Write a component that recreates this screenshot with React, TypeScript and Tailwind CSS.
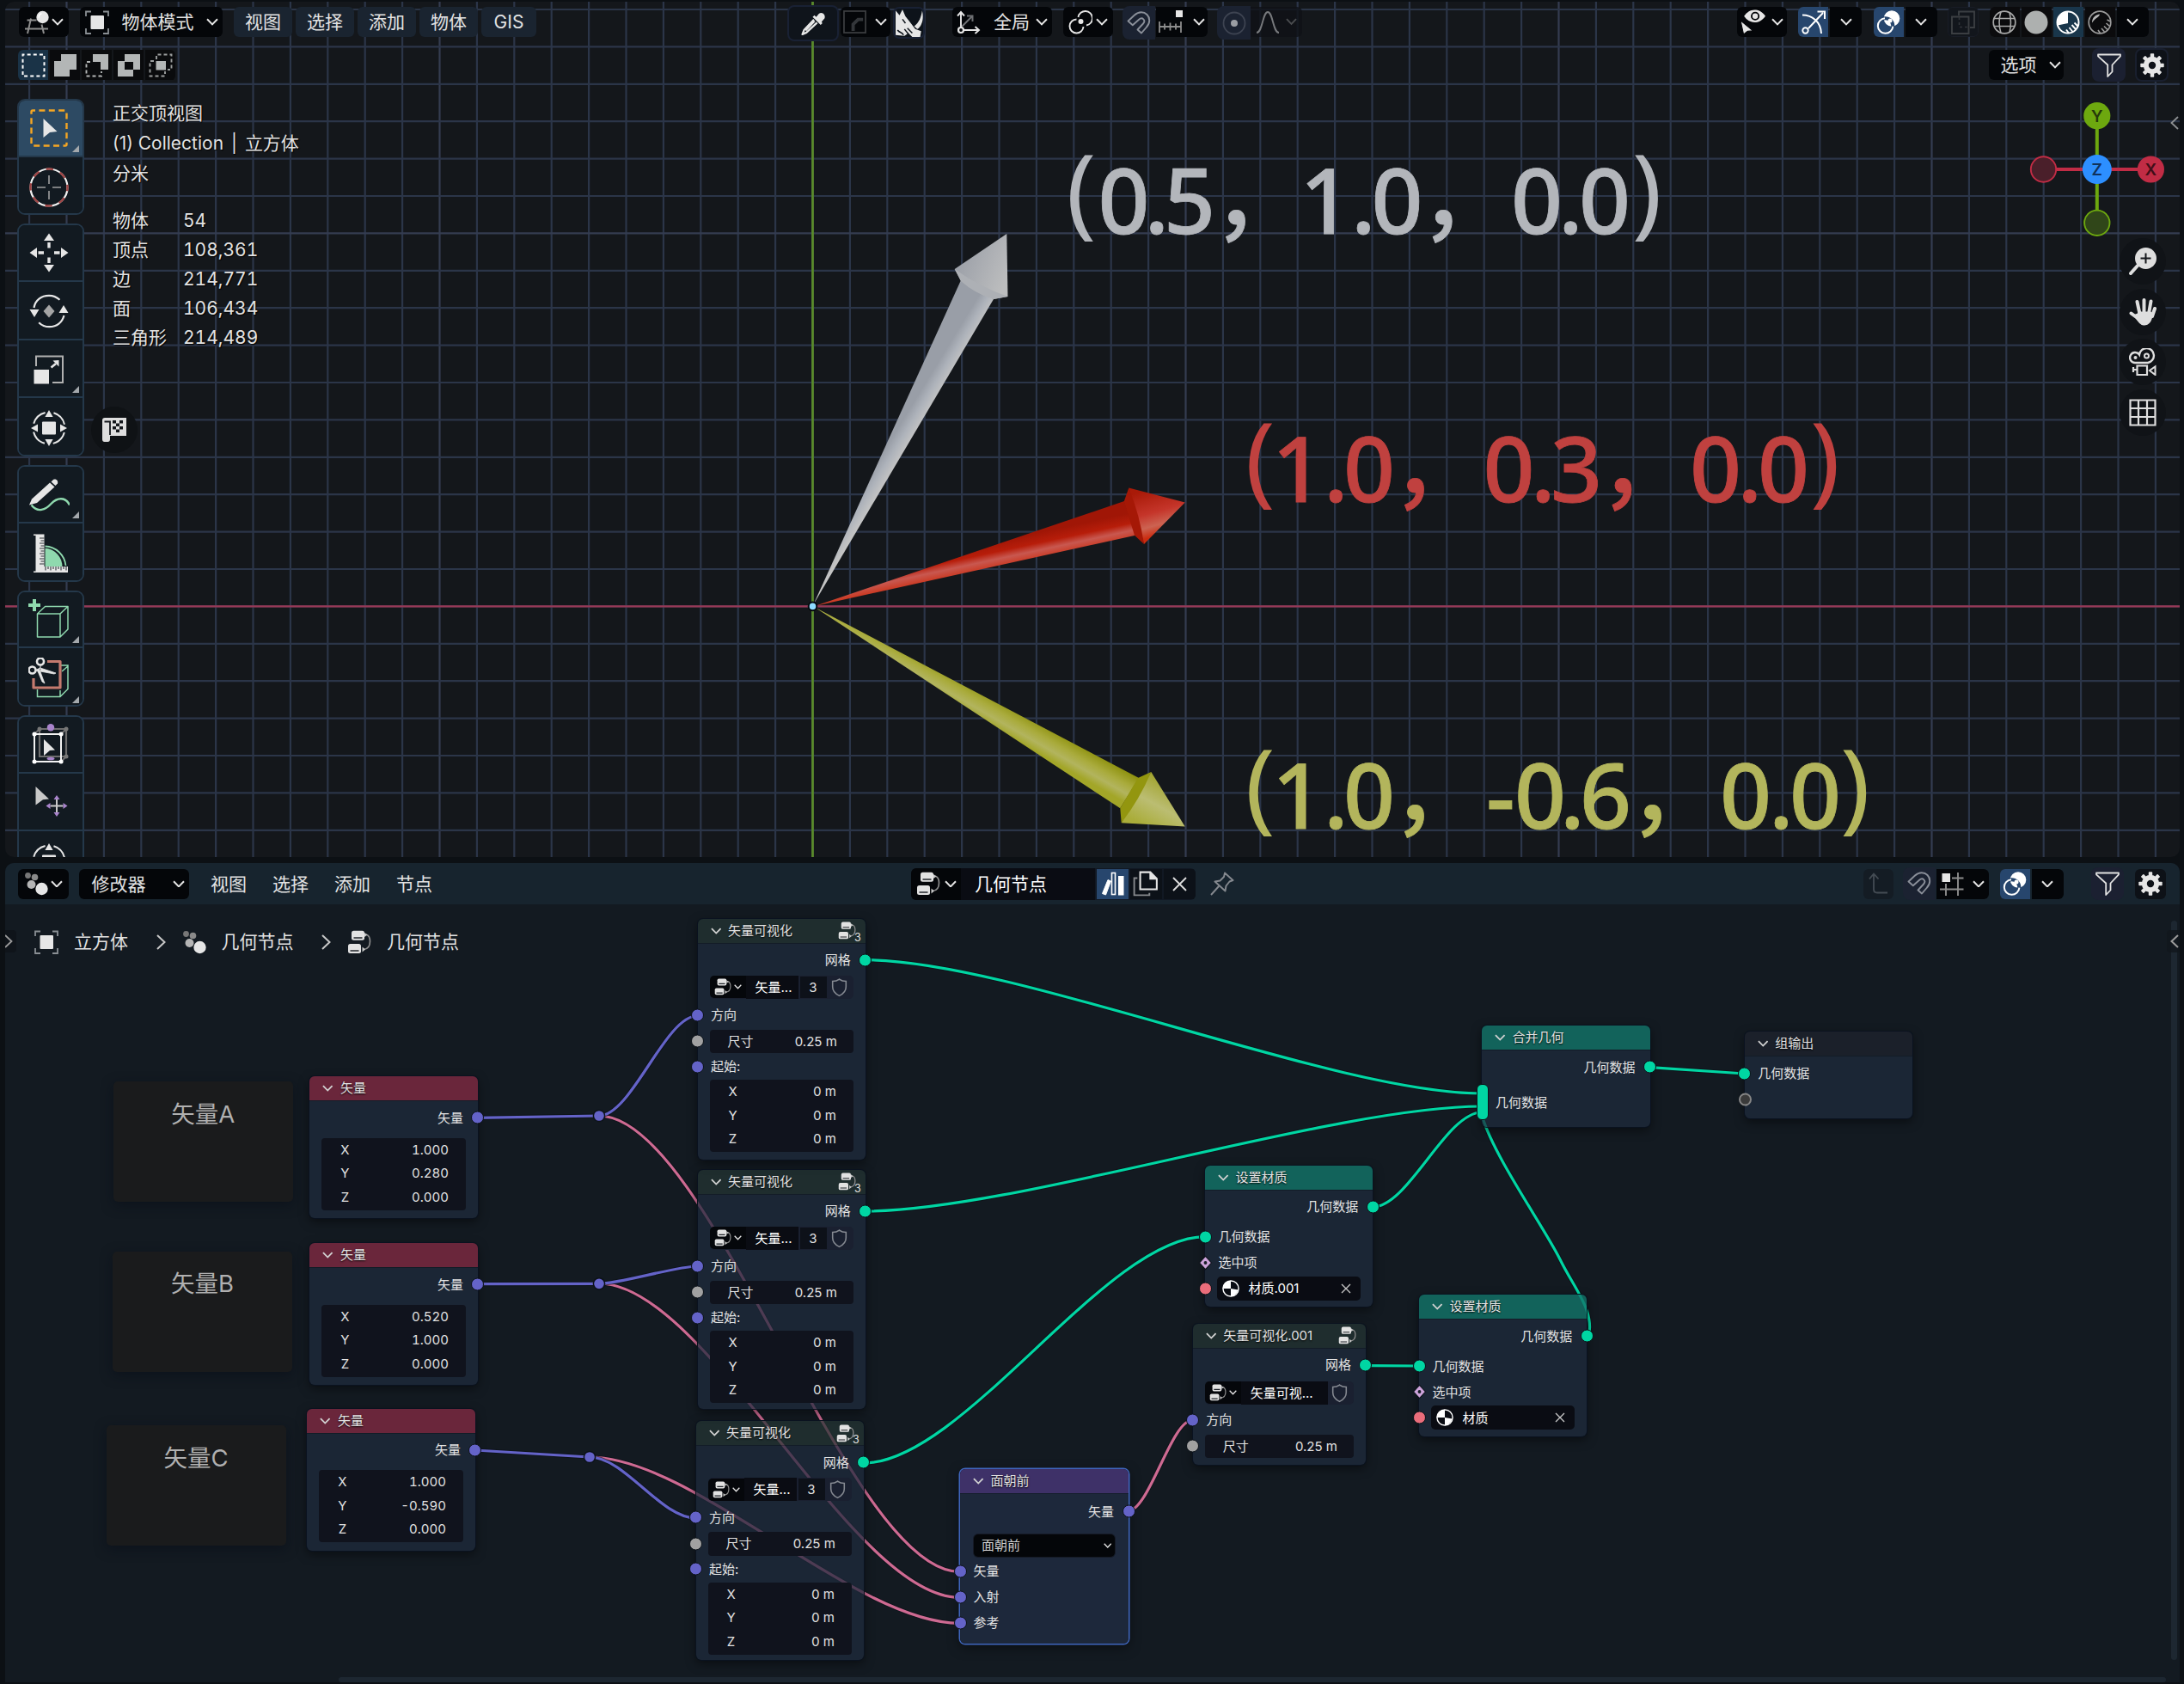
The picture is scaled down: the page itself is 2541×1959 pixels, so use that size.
import React from "react";

type P = { children?: React.ReactNode };

/* ---------- icon primitives ---------- */

function Ic({ s = 28, c = "", children }: P & { s?: number; c?: string }) {
  return (
    <svg width={s} height={s} viewBox="0 0 28 28" fill="none" className={"shrink-0 " + c}>
      {children}
    </svg>
  );
}

const Chev = ({ c = "text-[#e6e6e6]", w = 14 }: { c?: string; w?: number }) => (
  <svg width={w} height={w * 0.64} viewBox="0 0 14 9" fill="none" className={"shrink-0 " + c}>
    <path d="M1 1.2 7 7.4 13 1.2" stroke="currentColor" strokeWidth="2" />
  </svg>
);

const IView3D = () => (
  <Ic c="text-[#8d8d8d]">
    <path d="M2.500 11.500h11M0 21.500h27M7 9.500 3 27M19.500 16.500l2.500 10.500" stroke="currentColor" strokeWidth="2" />
    <circle cx="20.500" cy="8" r="7.200" fill="#e6e6e6" />
    <path d="M16.300 8.500a4.500 4.500 0 0 1 3.200-4.800" stroke="#fff" strokeWidth="1.500" />
  </Ic>
);

const IObject = () => (
  <Ic>
    <path d="M1 7V1.500h6M21 1.500h6V7M27 21v6h-6M7 27H1v-6" stroke="#8a8f94" strokeWidth="1.800" />
    <rect x="6.500" y="6" width="15.500" height="16" rx="1" fill="#e6e6e6" />
  </Ic>
);

const INodesType = () => (
  <Ic>
    <circle cx="4.500" cy="4.500" r="3.400" fill="#777" />
    <circle cx="12.500" cy="6.500" r="3.800" fill="#8a8a8a" />
    <circle cx="8.500" cy="15" r="5" fill="#b5b5b5" />
    <circle cx="20.500" cy="20" r="7.200" fill="#e6e6e6" />
  </Ic>
);

const INodeTree = ({ s = 28 }: { s?: number }) => (
  <Ic s={s}>
    <rect x="5" y="0.800" width="15" height="11" rx="2.500" fill="#e2e2e2" />
    <rect x="1" y="16" width="15" height="11" rx="2.500" fill="#e2e2e2" />
    <path d="M7.500 9h10M3.500 24h10" stroke="#20242a" strokeWidth="1.600" />
    <path d="M22 5c3 1 4.500 3.500 4.500 8s-1 9-7.500 9.500" stroke="#8d8d8d" strokeWidth="1.700" />
    <path d="M20 3v5l3.500-2.500zM17.500 19.500v6l3.500-3z" fill="#c8c8c8" />
  </Ic>
);

const IMagnet = () => (
  <Ic c="text-[#8a8f99]">
    <path
      d="M1.500 11.500 9 4.500c5-4.500 11-4 14.500-.5s4 9.500-.5 14.500l-6 7-4.500-4 6.500-7c1.800-2 1.500-4 .3-5.200s-3.300-1.300-5.200.4l-7.300 6.500z"
      stroke="currentColor"
      strokeWidth="1.900"
      strokeLinejoin="round"
    />
  </Ic>
);

const IOverlay = () => (
  <Ic>
    <circle cx="18" cy="9.500" r="9.300" fill="#fff" />
    <circle cx="10.500" cy="18" r="8.800" stroke="#27466d" strokeWidth="4" />
    <path d="M10 9.200a8.800 8.800 0 1 0 9.400 9.400" stroke="#fff" strokeWidth="2" />
    <path d="M12.500 9.500a8.800 8.800 0 0 1 6.400 6.300" stroke="#27466d" strokeWidth="1.800" strokeDasharray="3.500 2" />
    <circle cx="16" cy="12" r="2.500" fill="#fff" />
  </Ic>
);

const IFilter = () => (
  <Ic>
    <path d="M1 1.500h26v1.800L17.500 13.500v8L12.200 27V13.500L1 3.300z" stroke="#e2e2e2" strokeWidth="1.800" strokeLinejoin="round" />
  </Ic>
);

const IGear = () => (
  <Ic>
    <circle cx="14" cy="14" r="7.200" stroke="#e6e6e6" strokeWidth="6" />
    {[0, 45, 90, 135].map((a) => (
      <g key={a} transform={`rotate(${a} 14 14)`}>
        <rect x="11.800" y="0.300" width="4.400" height="5" rx="0.800" fill="#e6e6e6" />
        <rect x="11.800" y="22.700" width="4.400" height="5" rx="0.800" fill="#e6e6e6" />
      </g>
    ))}
  </Ic>
);

const IShield = ({ s = 23 }: { s?: number }) => (
  <Ic s={s} c="-translate-x-px">
    <path d="M14 2.500c3 2.300 6 3 9.500 3v8c0 6-4 10-9.500 12.500C8.500 23.500 4.500 19.500 4.500 13.500v-8c3.500 0 6.500-.7 9.500-3z" stroke="#868a92" strokeWidth="1.900" />
  </Ic>
);

/* ---------- toolbar buttons ---------- */

const Btn = ({ c = "", children }: P & { c?: string }) => (
  <div className={"flex h-[35px] shrink-0 items-center justify-center " + c}>{children}</div>
);

/* ---------- left tool shelf ---------- */

function Tool({ active, corner, last, children }: P & { active?: boolean; corner?: boolean; last?: boolean }) {
  return (
    <div
      className={
        "relative flex h-[67.700px] items-center justify-center pt-[2px] pr-[3px] " +
        (active ? "bg-[#2d4a63] " : "bg-[#121a21] ") +
        (last ? "" : "border-b-2 border-[#24384a]")
      }
    >
      <svg width="48" height="48" viewBox="0 0 48 48" fill="none">
        {children}
      </svg>
      {corner && (
        <svg width="8" height="8" viewBox="0 0 8 8" className="absolute right-[4px] bottom-[4px]">
          <path d="M8 0v8H0z" fill="#a3a8ac" />
        </svg>
      )}
    </div>
  );
}

const ToolGroup = ({ children }: P) => (
  <div className="w-[78px] overflow-hidden rounded-[9px] border-2 border-[#24384a]">
    <div className="-my-[2px]">{children}</div>
  </div>
);

const TransformGlyph = () => (
  <>
    <circle cx="24" cy="24" r="18.500" stroke="#e6e6e6" strokeWidth="2" strokeDasharray="19 10.060" strokeDashoffset="-5" />
    <rect x="16" y="16.500" width="16" height="15" rx="1" fill="#e6e6e6" />
    <path d="M24 3l4.600 8h-9.200zM24 45l4.600-8h-9.200zM3 24l8-4.600v9.200zM45 24l-8-4.600v9.200z" fill="#e6e6e6" />
  </>
);

function ToolShelf() {
  return (
    <div className="flex w-[78px] shrink-0 flex-col gap-[10px]">
      <ToolGroup>
        <Tool active corner>
          <rect x="3.500" y="3.500" width="41" height="41" rx="1.500" stroke="#f5a623" strokeWidth="2.400" strokeDasharray="7 4.400" strokeDashoffset="4" />
          <path d="M17.500 13 33.500 28l-8.500 1-7.500 6z" fill="#e6e6e6" />
        </Tool>
        <Tool last>
          <circle cx="24" cy="24" r="21.500" stroke="#f2f2f2" strokeWidth="2.200" />
          <circle cx="24" cy="24" r="21.500" stroke="#9e4444" strokeWidth="2.400" strokeDasharray="8.440 8.440" strokeDashoffset="4" />
          <path d="M10 24h10M28 24h10M24 10v10M24 28v10" stroke="#a0a0a0" strokeWidth="1.600" />
        </Tool>
      </ToolGroup>
      <ToolGroup>
        <Tool>
          <path d="M24 1.500l6 8.500H18zM24 46.500l6-8.500H18zM1.500 24l8.500-6v12zM46.500 24 38 18v12z" fill="#e6e6e6" />
          <path d="M24 12v6.500M24 29.500V36M11.500 24H18M30 24h6.500" stroke="#e6e6e6" strokeWidth="3.400" />
        </Tool>
        <Tool>
          <path d="M6.500 20C8 11 15 5.800 24 5.800c5 0 9 1.700 12.500 5M41.500 29C39.500 37 33 42.200 24.500 42.200c-5 0-9-1.700-12.300-5" stroke="#e6e6e6" strokeWidth="2.200" />
          <path d="M1.500 22h11l-5.500 9zM46.500 26h-11L41 17z" fill="#e6e6e6" />
          <path d="M24 16.500l6.500 7.500-6.500 7.500-6.500-7.500z" fill="#a5a5a5" />
        </Tool>
        <Tool corner>
          <path d="M9 20V8.500h31V39H28" stroke="#b0b0b0" strokeWidth="2" />
          <rect x="6.500" y="24" width="17.500" height="16.500" fill="#e6e6e6" />
          <path d="M26.500 21.500 32 17" stroke="#e6e6e6" strokeWidth="2.600" />
          <path d="M35.500 13v7.500L28.500 13.500z" fill="#e6e6e6" />
        </Tool>
        <Tool last>
          <TransformGlyph />
        </Tool>
      </ToolGroup>
      <ToolGroup>
        <Tool corner>
          <path d="M1 36.500 4 29.500 25 10.500l5.500 5-20.500 18.500z" fill="#e6e6e6" />
          <path d="M26.500 9.500 29 7c3-1.500 6 1 5 4.500l-2.500 2.500z" fill="#e6e6e6" />
          <path d="M3.500 36.500C11 46 20 42 26.500 35S43 26 48 36.500" stroke="#8fd9ae" strokeWidth="2.400" />
        </Tool>
        <Tool last>
          <path d="M19.500 41V17.500A22 22 0 0 1 39.500 40z" fill="#8fd9ae" />
          <path d="M19.500 16.500A23 23 0 0 1 41.500 37" stroke="#121a21" strokeWidth="1.500" />
          <path d="M19.500 15.500A25 25 0 0 1 43.500 38" stroke="#8fd9ae" strokeWidth="1.800" />
          <path d="M6 1.500h12.500V39H46v7H6v-1.500h2.500V3H6z" fill="#e6e6e6" />
          <path d="M13 6h5.500M14.500 9h4M13 12h5.500M14.500 15h4M13 18h5.500M14.500 21h4M13 24h5.500M14.500 27h4M13 30h5.500M14.500 33h4M13 36h5.500M20 39v4.500M23 39v3M26 39v4.500M29 39v3M32 39v4.500M35 39v3M38 39v4.500M41 39v3M44 39v4.500" stroke="#30363b" strokeWidth="1.100" />
        </Tool>
      </ToolGroup>
      <ToolGroup>
        <Tool corner>
          <path d="M7 1v14M0 8h14" stroke="#8fd9ae" strokeWidth="4" />
          <path d="M10.500 18H37v27H10.500zM10.500 18l9-8.500H46L37 18M46 9.500V36l-9 9" stroke="#8fd9ae" strokeWidth="1.500" strokeLinejoin="round" />
        </Tool>
        <Tool last corner>
          <path d="M10.500 37v8.500H37l9-9V9H38M37 45.500V38M39 16l7-6" stroke="#8fd9ae" strokeWidth="1.500" />
          <path d="M22 4.500h15v30.500H6V24" stroke="#c47a6e" strokeWidth="3.200" strokeLinejoin="round" />
          <circle cx="14" cy="4.500" r="4" stroke="#e6e6e6" strokeWidth="2.600" />
          <circle cx="4.500" cy="14.500" r="4" stroke="#e6e6e6" strokeWidth="2.600" />
          <path d="M14.500 8 13 14l6 16-3-2-5-12-3-1.500L14 12l18 6-2 1-16-3" fill="#e6e6e6" stroke="#e6e6e6" strokeWidth="0.800" />
        </Tool>
      </ToolGroup>
      <ToolGroup>
        <Tool>
          <path d="M13 6h31v32H13zM7 12l6-6M38 12l6-6M38 44l6-6" stroke="#6d6d6d" strokeWidth="2.200" />
          <circle cx="13" cy="6" r="2.500" fill="#777" />
          <circle cx="44" cy="6" r="2.500" fill="#777" />
          <circle cx="44" cy="38" r="2.500" fill="#777" />
          <path d="M7 12h31v32H7z" stroke="#f2f2f2" strokeWidth="2" />
          <path d="M7 12h.1M38 12h.1M38 44h.1M7 44h.1" stroke="#fff" strokeWidth="5" strokeLinecap="round" />
          <circle cx="26" cy="4.200" r="4.200" fill="#a984cc" />
          <ellipse cx="26" cy="40.500" rx="4.500" ry="1.800" fill="#a984cc" />
          <path d="M18 18l13 12.500-6 .5-7 6z" fill="#e6e6e6" />
        </Tool>
        <Tool>
          <path d="M8.500 6 24 20.500l-7 .8L8.500 27.500z" fill="#c9c9c9" />
          <path d="M33 21v15M25.500 28.500h15" stroke="#c9c9c9" strokeWidth="2" />
          <path d="M33 16l3.500 5h-7zM33 41l3.500-5h-7zM20.500 28.500l5-3.500v7zM45.500 28.500l-5-3.500v7z" fill="#a984cc" />
        </Tool>
        <Tool last>
          <TransformGlyph />
        </Tool>
      </ToolGroup>
    </div>
  );
}

/* ---------- 3D viewport scene ---------- */

const GX = 945.5;
const GY = 705.4;
const STEP = 43.4;

function Coord({ text, xs, y, fill }: { text: string; xs: number[]; y: number; fill: string }) {
  // xs holds the horizontal centre of every glyph
  const half: Record<string, number> = { "(": 20, ")": 15, ".": 14, "，": 27, "-": 17, "1": 35 };
  const mid = text.slice(1, -1);
  const x = xs.map((v, i) => v - (half[text[i]] ?? 30));
  const ys = Array.from(mid, (ch) => (ch === "，" ? y - 3 : y));
  return (
    <text
      fill={fill}
      stroke={fill}
      strokeWidth="0.800"
      fontSize="105"
      className="font-['Noto_Sans','Noto_Sans_CJK_SC',sans-serif] font-medium"
    >
      <tspan x={x[0]} y={y - 9} fontSize="116" strokeWidth="0" className="font-normal">
        (
      </tspan>
      <tspan x={x.slice(1, -1).join(" ")} y={ys.join(" ")}>
        {mid}
      </tspan>
      <tspan x={x[x.length - 1]} y={y - 9} fontSize="116" strokeWidth="0" className="font-normal">
        )
      </tspan>
    </text>
  );
}

function Scene() {
  const vs = Array.from({ length: 58 }, (_, i) => i - 21);
  const hs = Array.from({ length: 23 }, (_, i) => i - 16);
  return (
    <svg width="2530" height="995" viewBox="6 2 2530 995" className="absolute inset-0">
      <defs>
        <linearGradient id="gw" gradientUnits="userSpaceOnUse" x1="1044" y1="499" x2="1062" y2="510">
          <stop offset="0" stopColor="#999ea7" />
          <stop offset="0.450" stopColor="#adb2ba" />
          <stop offset="1" stopColor="#c4c4c4" />
        </linearGradient>
        <linearGradient id="gwh" gradientUnits="userSpaceOnUse" x1="1118" y1="300" x2="1172" y2="322">
          <stop offset="0" stopColor="#9da1a9" />
          <stop offset="1" stopColor="#bcbdbe" />
        </linearGradient>
        <linearGradient id="gr" gradientUnits="userSpaceOnUse" x1="1196" y1="622" x2="1203" y2="655">
          <stop offset="0" stopColor="#a01606" />
          <stop offset="0.350" stopColor="#b71d0a" />
          <stop offset="0.600" stopColor="#c85850" />
          <stop offset="1" stopColor="#cc2a0c" />
        </linearGradient>
        <linearGradient id="grh" gradientUnits="userSpaceOnUse" x1="1335" y1="570" x2="1350" y2="622">
          <stop offset="0" stopColor="#a91a08" />
          <stop offset="0.500" stopColor="#c5352a" />
          <stop offset="0.780" stopColor="#cc6352" />
          <stop offset="1" stopColor="#cb2c10" />
        </linearGradient>
        <linearGradient id="gy" gradientUnits="userSpaceOnUse" x1="1168" y1="816" x2="1152" y2="844">
          <stop offset="0" stopColor="#8f9210" />
          <stop offset="0.400" stopColor="#a9ab3c" />
          <stop offset="0.700" stopColor="#b2b45e" />
          <stop offset="1" stopColor="#a3a628" />
        </linearGradient>
        <linearGradient id="gyh" gradientUnits="userSpaceOnUse" x1="1352" y1="908" x2="1325" y2="957">
          <stop offset="0" stopColor="#a3a532" />
          <stop offset="0.500" stopColor="#bbbd72" />
          <stop offset="1" stopColor="#aaad3a" />
        </linearGradient>
      </defs>
      {vs.map((i) => (
        <line key={"v" + i} x1={GX + i * STEP} x2={GX + i * STEP} y1="2" y2="997" stroke={i % 10 === 0 ? "#343c51" : "#2b3548"} strokeWidth="2.200" />
      ))}
      {hs.map((i) => (
        <line key={"h" + i} y1={GY + i * STEP} y2={GY + i * STEP} x1="6" x2="2536" stroke={i % 10 === 0 ? "#343c51" : "#2b3548"} strokeWidth="2.200" />
      ))}
      <line x1="6" x2="2536" y1={GY} y2={GY} stroke="#983856" strokeWidth="2.300" />
      <line x1={GX} x2={GX} y1="2" y2="997" stroke="#5a8c2a" strokeWidth="2.700" />

      <path d="M946.500 703 1118 326 1156 348z" fill="url(#gw)" />
      <path d="M1171.300 272 1110.700 313 1118 327q16 14 38 21l16.500-3z" fill="url(#gwh)" />
      <path d="M1110.700 313 1118 327q16 14 38 21l16.500-3q-34-12-61.800-32z" fill="#adb0b5" />

      <path d="M948 705 1308 583 1321 622.700z" fill="url(#gr)" />
      <path d="M1378.700 584.500 1313.300 567.500 1331 633z" fill="url(#grh)" />
      <path d="M1313.300 567.500 1307.700 583.600 1320 622.700 1331 633q-5-34-17.700-65.500z" fill="#a51806" />

      <path d="M948 706.500 1325 905 1303.300 940.300z" fill="url(#gy)" />
      <path d="M1378.700 961.600 1339.300 898 1304.700 957.300z" fill="url(#gyh)" />
      <path d="M1339.300 898 1324 905 1303.300 940.300 1304.700 957.300q21-27 34.600-59.300z" fill="#93960f" />

      <circle cx={GX} cy={GY} r="4.800" fill="#8fdcff" stroke="#05080c" strokeWidth="2" />

      <Coord
        text="(0.5，1.0，0.0)"
        xs={[1260.6, 1307.5, 1345.6, 1384, 1438, 1547.5, 1586, 1625.6, 1678.8, 1788, 1827, 1867, 1913.7]}
        y={271.5}
        fill="#b3b6bb"
      />
      <Coord
        text="(1.0，0.3，0.0)"
        xs={[1468.8, 1515, 1554, 1593, 1646, 1755.6, 1795, 1834, 1887.5, 1996, 2035.6, 2075, 2121]}
        y={584}
        fill="#c0413f"
      />
      <Coord
        text="(1.0，-0.6，0.0)"
        xs={[1468.8, 1515, 1554, 1593, 1646, 1746, 1792, 1829, 1868, 1922, 2031, 2072, 2112, 2156]}
        y={963.5}
        fill="#b3b55c"
      />
    </svg>
  );
}

function NavGizmo() {
  return (
    <svg width="160" height="160" viewBox="2360 117 160 160" className="font-['Inter',sans-serif]">
      <path d="M2439.800 135v124" stroke="#6da80f" strokeWidth="4" />
      <path d="M2378 197h124" stroke="#c12c45" strokeWidth="4" />
      <circle cx="2439.800" cy="134.700" r="15.600" fill="#6da80f" />
      <circle cx="2439.800" cy="259.300" r="14.700" fill="#304619" stroke="#6da80f" strokeWidth="1.900" />
      <circle cx="2377.500" cy="197" r="14.700" fill="#4a1f2a" stroke="#c12c45" strokeWidth="1.900" />
      <circle cx="2502.400" cy="197" r="15.600" fill="#c12c45" />
      <circle cx="2439.800" cy="197" r="17" fill="#2d8fff" />
      <g fontSize="19" fontWeight="600" textAnchor="middle">
        <text x="2439.800" y="141.500" fill="#25380a">Y</text>
        <text x="2439.800" y="204" fill="#10325c">Z</text>
        <text x="2502.400" y="204" fill="#420e18">X</text>
      </g>
    </svg>
  );
}

const NavBtn = ({ children }: P) => (
  <div className="flex h-[54px] w-[54px] items-center justify-center rounded-full bg-[#101317]">
    <svg width="32" height="32" viewBox="0 0 32 32" fill="none">
      {children}
    </svg>
  </div>
);

const STATS: [string, string][] = [
  ["物体", "54"],
  ["顶点", "108,361"],
  ["边", "214,771"],
  ["面", "106,434"],
  ["三角形", "214,489"],
];

function Viewport() {
  return (
    <section className="relative mt-[2px] ml-[6px] flex h-[995px] w-[2530px] shrink-0 flex-col overflow-hidden rounded-[10px] bg-[#14171b]">
      <Scene />

      <header className="relative flex h-[50px] shrink-0 items-start pt-[6px] pl-[16px] text-[21px]">
        <Btn c="w-[58px] gap-[3px] rounded-[6px] bg-[#040609]">
          <IView3D />
          <Chev />
        </Btn>
        <Btn c="ml-[13px] w-[166px] rounded-[6px] bg-[#040609]">
          <IObject />
          <span className="mr-[14px] ml-[15px]">物体模式</span>
          <Chev />
        </Btn>
        <div className="ml-[13px] flex gap-[4px]">
          {["视图", "选择", "添加", "物体", "GIS"].map((t) => (
            <Btn key={t} c={(t === "GIS" ? "w-[64px]" : "w-[68px]") + " rounded-[6px] bg-[#1a2430]"}>
              {t}
            </Btn>
          ))}
        </div>

        <Btn c="-mt-[2px] ml-[292px] h-[42px] w-[60px] rounded-[8px] border-2 border-[#192134] bg-[#0f141b]">
          <Ic s={29}>
            <path d="M17 6.500 20 3c3-3 8 .5 6.500 5L23 12l1 1.500-2 2-9-9 2-2z" fill="#e6e6e6" />
            <path d="M14.500 9.500 3.500 21 1.500 26l4.500-2L18 13" stroke="#e6e6e6" strokeWidth="2.200" strokeLinejoin="round" />
            <path d="M15 11 5 21.500" stroke="#e6e6e6" strokeWidth="2.500" />
          </Ic>
        </Btn>
        <Btn c="ml-[2px] w-[58px] gap-[10px] rounded-[6px] bg-[#040609] pr-[2px]">
          <Ic s={27}>
            <rect x="1" y="1" width="26" height="26" stroke="#3c3e41" strokeWidth="1.800" />
            <path d="M24 11h-6l-6 6v8" stroke="#33363a" strokeWidth="4" />
          </Ic>
          <Chev />
        </Btn>
        <Btn c="ml-[3px] h-[37px] w-[37px] rounded-[7px] border-2 border-[#192134] bg-[#0d131a]">
          <Ic s={32}>
            <path d="M0 1l4 5 3-6 3 7 4 5 6 8 6 2-1 6h-8l-4-4-4 3-9-1z" fill="#e6e6e6" />
            <path d="M27 1c2 8 0 16-5 19l-3-3c5-4 7-9 8-16z" fill="#e6e6e6" />
            <path d="M2 21c2 3 5 2 6 5M9 20l4 5M12 19l5 5M7 10l3 4" stroke="#0d131a" strokeWidth="1.300" />
          </Ic>
        </Btn>
        <Btn c="ml-[32px] w-[116px] rounded-[6px] bg-[#040609]">
          <Ic>
            <path d="M5 20 18 7M12 6.500h6.500V13" stroke="#6d6f72" strokeWidth="2" />
            <path d="M5 3v16M7 23h18M1 6.500 5 2l4 4.500M21.500 19l4.500 4-4.500 4" stroke="#e6e6e6" strokeWidth="1.900" />
            <circle cx="5" cy="23" r="3" stroke="#e6e6e6" strokeWidth="2.200" />
          </Ic>
          <span className="mr-[7px] ml-[15px]">全局</span>
          <Chev />
        </Btn>
        <Btn c="ml-[13px] w-[58px] gap-[4px] rounded-[6px] bg-[#040609]">
          <Ic>
            <circle cx="14.500" cy="13" r="3" fill="#e6e6e6" />
            <path d="M11.500 8A8.300 8.300 0 1 1 21 17.500M9.500 10.500a8 8 0 1 0 8 8.500" stroke="#e6e6e6" strokeWidth="1.900" />
          </Ic>
          <Chev />
        </Btn>
        <Btn c="-mt-[1px] ml-[11px] h-[39px] w-[38px] rounded-l-[8px] bg-[#1b2231]">
          <IMagnet />
        </Btn>
        <Btn c="ml-[1px] w-[60px] gap-[12px] rounded-r-[6px] bg-[#040609]">
          <Ic>
            <rect x="20" y="0" width="8" height="8" fill="#e6e6e6" />
            <path d="M1 13v13M26 13v13M7 15.500v7M13.500 14.500v9M20 15.500v7M1 19h25" stroke="#8d8d8d" strokeWidth="1.800" />
          </Ic>
          <Chev />
        </Btn>
        <Btn c="-mt-[1px] ml-[11px] h-[39px] w-[39px] rounded-l-[8px] bg-[#1b2231]">
          <Ic>
            <circle cx="14" cy="14" r="12.500" stroke="#3d4351" strokeWidth="1.800" />
            <circle cx="14" cy="14" r="4" fill="#9a9da3" />
          </Ic>
        </Btn>
        <Btn c="w-[60px] gap-[7px] rounded-r-[6px] bg-[#0f1216]/80">
          <Ic>
            <path d="M1 26C8 26 8 2 14 2s6 24 13 24" stroke="#77797c" strokeWidth="1.900" />
          </Ic>
          <Chev c="text-[#4b4d50]" w={13} />
        </Btn>

        <Btn c="ml-[505.500px] w-[58px] gap-[7px] rounded-[6px] bg-[#040609]">
          <Ic s={29}>
            <path d="M4 7.500C8 2 12 .5 16 .5s8 1.500 12 7c-4 5.500-8 7-12 7s-8-1.500-12-7z" fill="#e6e6e6" />
            <circle cx="16.500" cy="7.500" r="4" stroke="#040609" strokeWidth="1.800" />
            <path d="M0 12.500 14 24l-6 .5L3.500 28z" fill="#e6e6e6" stroke="#040609" />
          </Ic>
          <Chev />
        </Btn>
        <Btn c="ml-[13.500px] w-[35px] rounded-l-[6px] bg-[#27466d]">
          <Ic>
            <path d="M1 5.500C12 5.500 22.500 13 23 27M8 21 25 3M18.500 1.500H27V10" stroke="#fff" strokeWidth="2" />
            <circle cx="4.500" cy="23.500" r="3.200" fill="#27466d" stroke="#fff" strokeWidth="1.900" />
          </Ic>
        </Btn>
        <Btn c="ml-[2px] w-[37px] rounded-r-[6px] bg-[#040609]">
          <Chev />
        </Btn>
        <Btn c="ml-[13.500px] w-[35px] rounded-l-[6px] bg-[#27466d]">
          <IOverlay />
        </Btn>
        <Btn c="ml-[2px] w-[37px] rounded-r-[6px] bg-[#040609]">
          <Chev />
        </Btn>
        <Btn c="ml-[12.500px] w-[36px] rounded-[6px] border border-[#191d26] bg-[#12161c]">
          <Ic>
            <path d="M1 7.500h19.500V27H1zM9 6V1.500h18V20h-5" stroke="#3b3e42" strokeWidth="1.900" />
            <path d="M9.500 8v11.500H20" stroke="#303338" strokeWidth="1.600" strokeDasharray="3 3" />
          </Ic>
        </Btn>
        <div className="ml-[12.500px] flex gap-[2px]">
          <Btn c="w-[35px] rounded-l-[6px] bg-[#0b0b0d]">
            <Ic>
              <circle cx="14" cy="14" r="12.800" stroke="#a8a8a8" strokeWidth="1.700" />
              <path d="M10 1.500c-2.500 8-2.500 17 0 25M20 2.500c2 8 2 15 0 23M2 9.500h24M2 18.500h24" stroke="#a8a8a8" strokeWidth="1.600" />
            </Ic>
          </Btn>
          <Btn c="w-[35px] bg-[#0b0b0d]">
            <Ic>
              <circle cx="14" cy="14" r="13.500" fill="#adb0af" />
            </Ic>
          </Btn>
          <Btn c="w-[35px] bg-[#19364b]">
            <Ic>
              <circle cx="14" cy="14" r="12.500" stroke="#fff" strokeWidth="2" />
              <path d="M14 1v14L2 17.500A13 13 0 0 1 14 1z" fill="#fff" />
              <path d="M12 22.500l3 4M15.500 20l4 5M18.500 17l4.500 5M21.500 14.500l4 4" stroke="#fff" strokeWidth="1.900" />
            </Ic>
          </Btn>
          <Btn c="w-[35px] bg-[#0b0b0d]">
            <Ic>
              <circle cx="14" cy="14" r="12.800" stroke="#9b9b9b" strokeWidth="1.700" />
              <path d="M5 14.500C5 8.500 9 5 14 4.500c0 3-5 4-9 10z" fill="#b5b5b5" />
              <path d="M12 23l2.500 3.500M16 21l3.500 4M19 18.500l4 4M21.500 15l4 3.500M22.500 11l4 2" stroke="#9b9b9b" strokeWidth="1.600" />
            </Ic>
          </Btn>
          <Btn c="w-[37px] rounded-r-[6px] bg-[#040609]">
            <Chev />
          </Btn>
        </div>
      </header>

      <div className="relative flex h-[50px] shrink-0 items-start justify-between pt-[6px] pr-[13px] pl-[15px] text-[21px]">
        <div className="flex h-[36px] gap-[2px] overflow-hidden rounded-[6px]">
          <Btn c="w-[35px] bg-[#1a3347]">
            <Ic>
              <rect x="1.500" y="1.500" width="25" height="25" stroke="#fff" strokeWidth="2" strokeDasharray="4 3.140" strokeDashoffset="2" />
            </Ic>
          </Btn>
          <Btn c="w-[35px] bg-[#0a0b0d]">
            <Ic>
              <path d="M9 1h18v18h-8v8H1V9h8z" fill="#b3b6b6" />
            </Ic>
          </Btn>
          <Btn c="w-[35px] bg-[#0a0b0d]">
            <Ic>
              <path d="M9 1h18v18h-9v-9H9z" fill="#b3b6b6" />
              <path d="M6 10H1.500v16.500H19V21" stroke="#b3b6b6" strokeWidth="1.900" strokeDasharray="4 3" />
            </Ic>
          </Btn>
          <Btn c="w-[35px] bg-[#0a0b0d]">
            <Ic>
              <path fillRule="evenodd" d="M9 1h18v18h-8v8H1V9h8zM9 10v9h10v-9z" fill="#b3b6b6" />
            </Ic>
          </Btn>
          <Btn c="w-[35px] bg-[#0a0b0d]">
            <Ic>
              <path d="M9 7V1.500h17.500V19H22M6 9H1.500v17.500H19V21" stroke="#9b9e9e" strokeWidth="1.900" strokeDasharray="4 3" />
              <rect x="8.500" y="9" width="11.500" height="10.500" fill="#b3b6b6" />
            </Ic>
          </Btn>
        </div>
        <div className="flex items-start">
          <Btn c="mr-[33px] w-[87px] gap-[14px] rounded-[6px] bg-[#040609] pl-[10px]">
            选项
            <Chev />
          </Btn>
          <Btn c="-mt-[2px] mr-[11px] h-[39px] w-[39px] rounded-[8px] bg-[#1b2031]">
            <IFilter />
          </Btn>
          <Btn c="-mt-[2px] h-[39px] w-[39px] rounded-[8px] border-2 border-[#191f2e] bg-[#0d1117]">
            <IGear />
          </Btn>
        </div>
      </div>

      <div className="relative flex pt-[13px] pl-[13.500px]">
        <ToolShelf />
        <div className="mt-[358px] ml-[8.500px] flex h-[54px] w-[54px] shrink-0 items-center justify-center rounded-full bg-[#0f1215]">
          <Ic>
            <path d="M0 3c0-2 1-3 3-3h25v21H9v4c0 2-1 3-2.500 3h-4C1 28 0 27 0 25z" fill="#dedede" />
            <path d="M2.500 4.500H9V20" stroke="#14171b" strokeWidth="1.800" />
            <path d="M12 3h4v3.500h-4zM20 3h4v3.500h-4zM16 6.500h4V10h-4zM12 10h4v3.500h-4zM20 10h4v3.500h-4zM16 13.500h4V17h-4z" fill="#14171b" />
          </Ic>
        </div>
        <div className="mt-[-1px] ml-[-29px] text-[21px] leading-[35px] [text-shadow:1px_1px_1px_#000]">
          <div>正交顶视图</div>
          <div>
            (1) Collection <span className="mx-[3px]">|</span> 立方体
          </div>
          <div>分米</div>
          <div className="mt-[21px] grid grid-cols-[82px_auto] leading-[34px] tabular-nums">
            {STATS.map(([k, v]) => (
              <React.Fragment key={k}>
                <span>{k}</span>
                <span>{v}</span>
              </React.Fragment>
            ))}
          </div>
        </div>
        <div className="mt-[2px] ml-auto flex flex-col items-end pr-[16px]">
          <NavGizmo />
          <div className="flex flex-col gap-[4.500px]">
            <NavBtn>
              <circle cx="19.500" cy="12.500" r="12.500" fill="#dedede" />
              <path d="M19.500 6.500v12M13.500 12.500h12" stroke="#14171b" strokeWidth="2" />
              <path d="M10 21 2 30" stroke="#dedede" strokeWidth="4" strokeLinecap="round" />
            </NavBtn>
            <NavBtn>
              <path d="M9.500 4 12.500 18M17.500 2v16M25.500 3.500 23 18M30 12l-3 9M2.500 17.500 10 23" stroke="#dedede" strokeWidth="4" strokeLinecap="round" />
              <path d="M10.500 15.500h14.500l4 2-3 8c-2 5-6 6-9 6s-6-3-12-12l5-2z" fill="#dedede" />
            </NavBtn>
            <NavBtn>
              <path d="M7 17a6 6 0 1 1 5-9.500 8.500 8.500 0 1 1 10 9.500z" stroke="#dedede" strokeWidth="2.400" />
              <circle cx="7.500" cy="11" r="2" fill="#dedede" />
              <circle cx="20.500" cy="9" r="2.500" stroke="#dedede" strokeWidth="2" />
              <path d="M9.500 20.500H21V31H9.500zM5 22v6M9 25H5" stroke="#dedede" strokeWidth="2.200" />
              <path d="M30.500 21.500v9.500L24 26z" stroke="#dedede" strokeWidth="2" />
            </NavBtn>
            <NavBtn>
              <path d="M1.500 1.500h29v29h-29zM11 1.500v29M21 1.500v29M1.500 11h29M1.500 21h29" stroke="#dedede" strokeWidth="2.200" />
            </NavBtn>
          </div>
        </div>
        <svg width="10" height="16" viewBox="0 0 10 16" fill="none" className="absolute top-[33px] right-[1px]">
          <path d="M9 1 1.500 8 9 15" stroke="#8d9093" strokeWidth="1.800" />
        </svg>
      </div>
    </section>
  );
}

/* ---------- node editor ---------- */

const BLUE = "#6463c8";
const GREEN = "#00d6a3";
const PINK = "#ce6a92";

const curve = (x1: number, y1: number, x2: number, y2: number, h = 0.27) => {
  const d = (x2 - x1) * h;
  return `M${x1} ${y1}C${x1 + d} ${y1} ${x2 - d} ${y2} ${x2} ${y2}`;
};

const LINKS: [string, string][] = [
  [PINK, curve(697, 1298, 1116, 1828.3, 0.31)],
  [PINK, curve(697, 1493, 1116, 1858.3, 0.3)],
  [PINK, curve(686, 1695, 1116, 1888.3, 0.28)],
  [PINK, curve(1312, 1758, 1387.5, 1652, 0.33)],
  [BLUE, "M555 1300.300 697 1298"],
  [BLUE, "M555.500 1493.700 697 1493.300"],
  [BLUE, "M552.700 1687 686 1695"],
  [BLUE, curve(697, 1298, 811.7, 1181.5, 0.33)],
  [BLUE, curve(697, 1493.3, 811.7, 1473, 0.22)],
  [BLUE, curve(686, 1695, 809.5, 1766, 0.33)],
  [GREEN, curve(1006.8, 1116.7, 1724, 1272, 0.24)],
  [GREEN, curve(1006.8, 1409, 1724, 1287, 0.24)],
  [GREEN, curve(1005, 1702, 1402, 1438.6, 0.29)],
  [GREEN, curve(1597, 1404, 1724, 1294, 0.33)],
  [GREEN, "M1848 1556C1856 1525 1832 1500 1815 1465S1738 1345 1725 1300"],
  [GREEN, "M1919.700 1241.600 2030 1249"],
  [GREEN, "M1589 1588.700 1651 1589"],
];

const Socket = ({ c, r = false }: { c: string; r?: boolean }) => (
  <span className={"absolute top-1/2 h-[15px] w-[15px] -translate-y-1/2 rounded-full border-[1.500px] border-[#0c1219] " + (r ? "-right-[7.500px] " : "-left-[7.500px] ") + c} />
);
const SBLUE = "bg-[#6463c8]";
const SGREEN = "bg-[#00d6a3]";
const SGREY = "bg-[#a1a1a1]";
const SRED = "bg-[#ea6d7b]";

function Node({ x, y, w, h, title, hc, icon, count, selected, children }: P & {
  x: number; y: number; w: number; h: number; title: string; hc: string; icon?: boolean; count?: string; selected?: boolean;
}) {
  return (
    <div
      className={"absolute flex flex-col rounded-[6px] text-[15px] leading-none " + (selected ? "shadow-[0_0_0_1.500px_#3f66bd,0_4px_14px_rgba(0,0,0,0.5)]" : "shadow-[0_0_0_1px_#0a121f,0_4px_12px_rgba(0,0,0,0.5)]")}
      style={{ left: x - 6, top: y - 1052, width: w, height: h }}
    >
      <div className={"flex h-[28px] shrink-0 items-center rounded-t-[6px] pl-[15px] " + hc}>
        <Chev c="text-[#d2d2d2]" w={12.5} />
        <span className="mt-[-1px] ml-[8px] [text-shadow:0_1px_2px_#000]">{title}</span>
        {icon && (
          <span className="relative mr-[11px] ml-auto">
            <INodeTree s={21} />
            {count && <span className="absolute right-[-6px] bottom-[-4px] text-[12.500px]">{count}</span>}
          </span>
        )}
      </div>
      <div className={"flex flex-1 flex-col rounded-b-[6px] border-t border-black/25 " + (selected ? "bg-[#1d283b] pt-px" : "bg-[rgba(30,42,60,0.73)]")}>{children}</div>
    </div>
  );
}

const Out = ({ t, c }: { t: string; c: string }) => (
  <div className="relative flex h-[38px] shrink-0 items-center justify-end pr-[17px]">
    {t}
    <Socket c={c} r />
  </div>
);

const In = ({ t, c, k = "h-[30px]" }: { t: string; c: string; k?: string }) => (
  <div className={"relative flex shrink-0 items-center pl-[15.500px] " + k}>
    {t}
    <Socket c={c} />
  </div>
);

const Vec = ({ v, k = "" }: { v: string[]; k?: string }) => (
  <div className={"mx-[14px] flex h-[84px] shrink-0 flex-col rounded-[4px] bg-[#10131d] pr-[20px] pl-[21px] tabular-nums " + k}>
    {["X", "Y", "Z"].map((a, i) => (
      <div key={a} className="flex h-[27.500px] items-center justify-between">
        <span className="w-[12px] text-center">{a}</span>
        <span>{v[i]}</span>
      </div>
    ))}
  </div>
);

const Size = ({ k = "pr-[19px]" }: { k?: string }) => (
  <div className="relative">
    <div className={"mx-[14px] flex h-[27.500px] items-center justify-between rounded-[4px] bg-[#10131d] pl-[21px] " + k}>
      <span>尺寸</span>
      <span>0.25 m</span>
    </div>
    <Socket c={SGREY} />
  </div>
);

const Vector = ({ x, y, v }: { x: number; y: number; v: string[] }) => (
  <Node x={x} y={y} w={195.5} h={165} title="矢量" hc="bg-[#6a263b]">
    <Out t="矢量" c={SBLUE} />
    <Vec v={v} k="mt-[4.500px]" />
  </Node>
);

const Visual = ({ x, y, h }: { x: number; y: number; h: number }) => (
  <Node x={x} y={y} w={195.3} h={h} title="矢量可视化" hc="bg-[rgba(35,52,51,0.73)]" icon count="3">
    <Out t="网格" c={SGREEN} />
    <div className="mx-[14px] flex h-[27px] shrink-0 -translate-y-px items-center rounded-[5px] bg-[#1a2030]">
      <div className="flex h-[26px] w-[42px] items-center gap-[3px] rounded-l-[5px] bg-[#05070b] pl-[5px]">
        <INodeTree s={20} />
        <Chev w={9} />
      </div>
      <div className="flex h-full w-[61px] items-center bg-[#0a0c13] pl-[11px] text-white">矢量...</div>
      <div className="ml-[2px] flex h-[25px] w-[31px] items-center justify-center bg-[#0d1119]">3</div>
      <div className="flex flex-1 justify-center">
        <IShield />
      </div>
    </div>
    <In t="方向" c={SBLUE} k="mt-[8px] h-[20px] mb-[7px]" />
    <Size />
    <In t="起始:" c={SBLUE} k="h-[31px]" />
    <Vec v={["0 m", "0 m", "0 m"]} />
  </Node>
);

const SetMaterial = ({ x, y, m }: { x: number; y: number; m: string }) => (
  <Node x={x} y={y} w={195.3} h={164.5} title="设置材质" hc="bg-[rgba(19,117,106,0.8)]">
    <Out t="几何数据" c={SGREEN} />
    <In t="几何数据" c={SGREEN} k="mt-px h-[30px]" />
    <div className="relative flex h-[30px] items-center pl-[15.500px]">
      选中项
      <svg width="17" height="18" viewBox="0 0 16 16" className="absolute left-[-8.500px]">
        <path d="M8 .8 14.500 8 8 15.200 1.500 8z" fill="#cda3da" stroke="#0c1219" />
        <circle cx="8" cy="8" r="1.800" fill="#171c26" />
      </svg>
    </div>
    <div className="relative mt-[1px]">
      <div className="mx-[14px] flex h-[28px] items-center rounded-[5px] bg-[#0a0c13] pr-[11px] pl-[6px] text-white">
        <Ic s={20}>
          <circle cx="14" cy="14" r="12.700" stroke="#fff" strokeWidth="2" />
          <path d="M14 1v13H1A13 13 0 0 1 14 1zM14 27c5-1 10-5 12-11l-12-2z" fill="#fff" />
        </Ic>
        <span className="ml-[10.500px]">{m}</span>
        <svg width="12" height="12" viewBox="0 0 12 12" className="ml-auto">
          <path d="M1 1l10 10M11 1 1 11" stroke="#c4c4c4" strokeWidth="1.400" />
        </svg>
      </div>
      <Socket c={SRED} />
    </div>
  </Node>
);

const Note = ({ x, y, t }: { x: number; y: number; t: string }) => (
  <div
    className="absolute h-[140px] w-[209px] rounded-[5px] bg-[#1a1b1c] pt-[23.500px] text-center text-[27.500px] leading-[28px] text-[#b0b0b0] shadow-[0_4px_14px_rgba(8,12,24,0.55)]"
    style={{ left: x - 6, top: y - 1052 }}
  >
    {t}
  </div>
);

const Crumb = ({ icon, t }: { icon: React.ReactNode; t: string }) => (
  <>
    {icon}
    <span className="ml-[18px]">{t}</span>
  </>
);

const Sep = ({ k }: { k: string }) => (
  <svg width="11" height="18" viewBox="0 0 11 18" fill="none" className={k}>
    <path d="M1 1l8.500 8L1 17" stroke="#c9c9c9" strokeWidth="2" />
  </svg>
);

function NodeEditor() {
  return (
    <section className="mt-[7px] ml-[6px] flex h-[953px] w-[2530px] shrink-0 flex-col overflow-hidden rounded-t-[10px] bg-[#131a21]">
      <header className="flex h-[48px] shrink-0 items-center bg-[#17242e] pl-[15px] text-[21px]">
        <Btn c="w-[59px] gap-[3px] rounded-[6px] bg-[#040609]">
          <INodesType />
          <Chev />
        </Btn>
        <Btn c="ml-[12px] w-[128px] gap-[31px] rounded-[6px] bg-[#040609] pl-[9px]">
          修改器
          <Chev />
        </Btn>
        <nav className="ml-[25px] flex gap-[30px]">
          {["视图", "选择", "添加", "节点"].map((t) => (
            <span key={t} className="w-[42px]">{t}</span>
          ))}
        </nav>

        <div className="ml-[557px] flex h-[37px] items-center overflow-hidden rounded-[6px] bg-[#111823]">
          <Btn c="h-[37px] w-[58px] gap-[5px] bg-[#040609]">
            <INodeTree />
            <Chev />
          </Btn>
          <div className="flex h-[37px] w-[156px] items-center bg-[#0a0c13] pl-[16px] text-white">几何节点</div>
          <Btn c="ml-[2px] w-[37px] bg-[#27466d]">
            <Ic>
              <path d="M1.500 25.500 8 9.500l3.500 1.500L5.500 27z" fill="#fff" stroke="#fff" />
              <rect x="12.500" y="1.500" width="4" height="25" stroke="#fff" strokeWidth="1.600" />
              <rect x="20" y="5" width="6.500" height="22.500" fill="#fff" />
            </Ic>
          </Btn>
          <Btn c="ml-[2px] w-[37px] bg-[#0c1118]">
            <Ic s={30} c="-translate-x-px">
              <path d="M5 8H1.500v18.500H18V24" stroke="#85888c" strokeWidth="1.800" />
              <path d="M8 1.500h11l7 7V20H8z" stroke="#e6e6e6" strokeWidth="1.900" />
              <path d="M18 1v8.500h8.500z" fill="#e6e6e6" />
            </Ic>
          </Btn>
          <Btn c="ml-[2px] w-[37px] bg-[#0c1118]">
            <svg width="17" height="17" viewBox="0 0 17 17">
              <path d="M1 1l15 15M16 1 1 16" stroke="#dcdcdc" strokeWidth="1.900" />
            </svg>
          </Btn>
        </div>
        <Ic c="ml-[17px]">
          <path d="M1 27l9-10M17 1.500l9.500 8.500-4 1.500-4 5-1 6L5.500 11.500l6-1 4.500-4.500z" stroke="#85898f" strokeWidth="1.900" strokeLinejoin="round" />
        </Ic>

        <Btn c="ml-[731.500px] w-[35px] rounded-[6px] bg-[#141c24]">
          <Ic c="translate-x-[2px]">
            <path d="M2 8.500 7 2.500l5.500 6M7 3v17.500q0 4 4 4h12" stroke="#444c54" strokeWidth="1.800" />
          </Ic>
        </Btn>
        <Btn c="ml-[11px] h-[38px] w-[38px] rounded-l-[8px] bg-[#1b2231]">
          <IMagnet />
        </Btn>
        <Btn c="ml-px w-[61px] gap-[10px] rounded-r-[6px] bg-[#040609]">
          <Ic>
            <rect x="2.500" y="2" width="9.500" height="10" fill="#e6e6e6" />
            <path d="M14 7.500h13.500M21 1v27M0 20.500h27.500M7 14v14" stroke="#8d8d8d" strokeWidth="1.900" />
          </Ic>
          <Chev />
        </Btn>
        <Btn c="ml-[13px] w-[35px] rounded-l-[6px] bg-[#27466d]">
          <IOverlay />
        </Btn>
        <Btn c="ml-[2px] w-[37px] rounded-r-[6px] bg-[#040609]">
          <Chev />
        </Btn>
        <Btn c="ml-[32.500px] h-[38px] w-[38px] rounded-[8px] bg-[#1b2031]">
          <IFilter />
        </Btn>
        <Btn c="ml-[12.500px] w-[36px] rounded-[6px] bg-[#0d1117]">
          <IGear />
        </Btn>
      </header>

      <div className="relative flex-1">
        <svg width="2530" height="905" viewBox="6 1052 2530 905" fill="none" className="absolute inset-0">
          {LINKS.map(([c, d], i) => (
            <g key={i}>
              <path d={d} stroke="#0b1117" strokeWidth="5.200" opacity="0.600" />
              <path d={d} stroke={c} strokeWidth="3.200" />
            </g>
          ))}
          {[[697, 1298], [697, 1493.3], [686, 1695]].map(([x, y]) => (
            <circle key={y} cx={x} cy={y} r="6.600" fill={BLUE} stroke="#0c1219" strokeWidth="1.500" />
          ))}
        </svg>

        <div className="relative flex items-center pt-[30px] pl-[34px] text-[21px] leading-[28px]">
          <Crumb icon={<IObject />} t="立方体" />
          <Sep k="mr-[19px] ml-[32.500px]" />
          <Crumb icon={<INodesType />} t="几何节点" />
          <Sep k="mr-[19px] ml-[32.500px]" />
          <Crumb icon={<INodeTree />} t="几何节点" />
        </div>

        <div className="absolute top-[30px] left-0 flex h-[26px] w-[13px] items-center rounded-r-[4px] bg-[#0f141a]">
          <svg width="9" height="16" viewBox="0 0 9 16" fill="none">
            <path d="M0 1l7.500 7L0 15" stroke="#9b9b9b" strokeWidth="1.800" />
          </svg>
        </div>

        <Note x={131.8} y={1258} t="矢量A" />
        <Note x={131} y={1455.7} t="矢量B" />
        <Note x={123.5} y={1658} t="矢量C" />

        <Vector x={360.4} y={1252} v={["1.000", "0.280", "0.000"]} />
        <Vector x={360.4} y={1446} v={["0.520", "1.000", "0.000"]} />
        <Vector x={357.4} y={1638.7} v={["1.000", "-0.590", "0.000"]} />

        <Visual x={811.5} y={1068.7} h={280.3} />
        <Visual x={811.5} y={1360.5} h={278} />
        <Visual x={809.5} y={1653.2} h={278.300} />

        <Node x={1117} y={1709.4} w={196} h={203} title="面朝前" hc="bg-[#3e3168]" selected>
          <Out t="矢量" c={SBLUE} />
          <div className="mx-[16px] mt-[7.500px] mb-[2px] flex h-[26px] shrink-0 items-center justify-between rounded-[5px] bg-[#040609] pr-[4px] pl-[9px] text-[#cfcfcf] ring-1 ring-[#151a26]">
            面朝前
            <Chev w={9.5} />
          </div>
          <In t="矢量" c={SBLUE} />
          <In t="入射" c={SBLUE} />
          <In t="参考" c={SBLUE} />
        </Node>

        <Node x={1387.7} y={1539.7} w={201.3} h={164.7} title="矢量可视化.001" hc="bg-[rgba(35,52,51,0.73)]" icon>
          <Out t="网格" c={SGREEN} />
          <div className="mx-[14px] flex h-[27px] shrink-0 items-center rounded-[5px] bg-[#1a2030]">
            <div className="flex h-[26px] w-[42px] items-center gap-[3px] rounded-l-[5px] bg-[#05070b] pl-[5px]">
              <INodeTree s={20} />
              <Chev w={9} />
            </div>
            <div className="flex h-full w-[101px] items-center bg-[#0a0c13] pl-[11px] text-white">矢量可视...</div>
            <div className="flex flex-1 justify-center">
              <IShield />
            </div>
          </div>
          <In t="方向" c={SBLUE} k="mt-[8px] h-[20px] mb-[7px]" />
          <Size />
        </Node>

        <SetMaterial x={1402} y={1355.6} m="材质.001" />
        <SetMaterial x={1651} y={1506.2} m="材质" />

        <Node x={1724} y={1193} w={195.5} h={118} title="合并几何" hc="bg-[rgba(19,117,106,0.8)]">
          <Out t="几何数据" c={SGREEN} />
          <div className="relative mt-[6px] flex h-[32px] items-center pl-[16px]">
            几何数据
            <span className="absolute top-[-5px] left-[-6.500px] h-[42px] w-[14px] rounded-[6px] border-[1.500px] border-[#0c1219] bg-[#00d6a3]" />
          </div>
        </Node>

        <Node x={2029.7} y={1200} w={195.3} h={100.5} title="组输出" hc="bg-[#1b202a]">
          <In t="几何数据" c={SGREEN} k="mt-[4.500px] h-[30px]" />
          <div className="relative h-[30px]">
            <span className="absolute top-1/2 -left-[7px] h-[15px] w-[15px] -translate-y-1/2 rounded-full border-2 border-[#868686] bg-[#3a3a3a]" />
          </div>
        </Node>

        <div className="absolute top-[19px] right-[3px] bottom-[26px] w-[7px] rounded-full bg-[#1d2731]" />
        <div className="absolute top-[30px] right-0 flex h-[26px] w-[15px] items-center justify-end rounded-l-[4px] bg-[#12171d]/80 pr-px">
          <svg width="10" height="16" viewBox="0 0 10 16" fill="none">
            <path d="M9 1 1.500 8 9 15" stroke="#9b9b9b" strokeWidth="2" />
          </svg>
        </div>
        <div className="absolute right-[16px] bottom-0 left-[388px] h-[6px] rounded-full bg-[#1d2731]" />
      </div>
    </section>
  );
}

export default function App() {
  return (
    <main className="flex h-[1959px] w-[2541px] flex-col overflow-hidden bg-[#0c1014] font-['Inter','Noto_Sans_CJK_SC',sans-serif] leading-none whitespace-nowrap text-[#e2e2e2]">
      <Viewport />
      <NodeEditor />
    </main>
  );
}
